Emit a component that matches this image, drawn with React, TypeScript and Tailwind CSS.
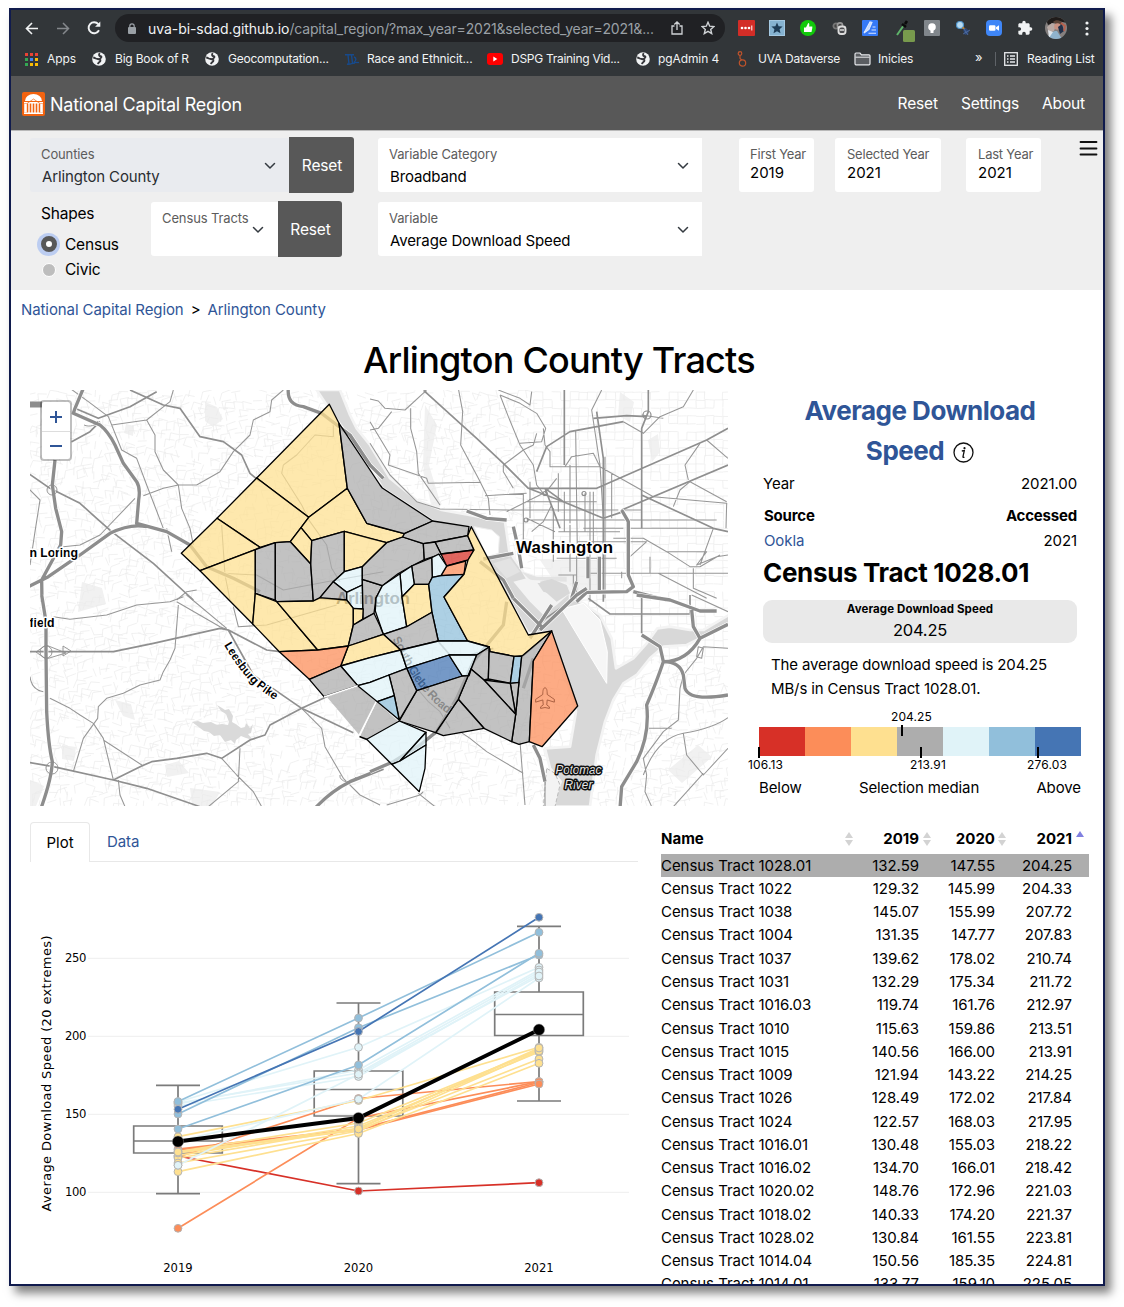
import React from "react";

const Y = "#fee090";
const G = "#adadad";
const L = "#e0f3f8";
const B = "#91bfdb";
const O = "#fc8d59";
const R = "#d73027";
const D = "#4575b4";

/* ---------- browser chrome ---------- */

const Globe = () => (
  <svg width="14" height="14" viewBox="0 0 14 14">
    <circle cx="7" cy="7" r="6.8" fill="#f1f3f4" />
    <path d="M1.200 5.500c2 .2 2.400 1.500 4.300 1.400M7.800 1.200C6.500 2.500 7 4 8.600 4.200c1.400.2.900 1.600-.8 2.600M5.400 7c1.600.2 3.400.3 3 1.800-.4 1.400-2.200 1-2.400 3.400" fill="none" stroke="#35363a" strokeWidth="1.900" />
  </svg>
);

const AppsIcon = () => (
  <svg width="13" height="13" viewBox="0 0 13 13">
    {["#ea4335", "#ea4335", "#ea4335", "#34a853", "#4285f4", "#fbbc04", "#34a853", "#fbbc04", "#fbbc04"].map((c, i) => (
      <rect key={i} x={(i % 3) * 5} y={Math.floor(i / 3) * 5} width="3" height="3" fill={c} />
    ))}
  </svg>
);

const RaceIcon = () => (
  <svg width="16" height="13" viewBox="0 0 16 13">
    <path d="M1 1.800h9M4 2l1 9M7.500 2l1 8M3 11c3 1 5-1 8-1M10 4c3 1 2 4 0 5" fill="none" stroke="#174a8c" strokeWidth="1.400" />
    <path d="M11 9.500h4" stroke="#174a8c" strokeWidth="1.300" />
  </svg>
);

const YoutubeIcon = () => (
  <svg width="16" height="12" viewBox="0 0 16 12">
    <rect width="16" height="12" rx="3" fill="#f00" />
    <path d="M6.300 3.500v5l4-2.500z" fill="#fff" />
  </svg>
);

const DataverseIcon = () => (
  <svg width="10" height="16" viewBox="0 0 10 16" fill="none" stroke="#c0532b" strokeWidth="1.200">
    <circle cx="3" cy="2.500" r="1.800" />
    <circle cx="5.500" cy="12" r="3.200" />
    <path d="M3 4.300v3c0 .8 1 1 2 1.500" />
  </svg>
);

const FolderIcon = () => (
  <svg width="17" height="14" viewBox="0 0 17 14">
    <path d="M1 11.500V2.200C1 1.500 1.400 1 2 1h4l1.500 1.800H15c.6 0 1 .4 1 1v8c0 .6-.4 1-1 1H2c-.6 0-1-.5-1-1.300z" fill="#5b5e62" stroke="#e8eaed" strokeWidth="1.200" />
    <path d="M1.500 5.200h14" stroke="#e8eaed" />
  </svg>
);

const bookmarks = [
  { label: "Apps", icon: <AppsIcon />, cell: "w-[67px]", gap: "w-[22px]", text: "tracking-[-0.1px]" },
  { label: "Big Book of R", icon: <Globe />, cell: "w-[113px]", gap: "w-[23px]", text: "tracking-[-0.2px]" },
  { label: "Geocomputation...", icon: <Globe />, cell: "w-[139px]", gap: "w-[23px]", text: "tracking-[-0.22px]" },
  { label: "Race and Ethnicit...", icon: <RaceIcon />, cell: "w-[143px]", gap: "w-[23px]", text: "tracking-[-0.15px]" },
  { label: "DSPG Training Vid...", icon: <YoutubeIcon />, cell: "w-[149px]", gap: "w-[24px]", text: "tracking-[-0.28px]" },
  { label: "pgAdmin 4", icon: <Globe />, cell: "w-[101px]", gap: "w-[22px]", text: "tracking-[-0.1px]" },
  { label: "UVA Dataverse", icon: <DataverseIcon />, cell: "w-[117px]", gap: "w-[21px]", text: "tracking-[-0.25px]" },
  { label: "Inicies", icon: <FolderIcon />, cell: "w-[120px]", gap: "w-[24px]", text: "tracking-[-0.15px]" },
];

const extensions = [
  <svg width="17" height="16" viewBox="0 0 17 16"><rect width="17" height="16" rx="1" fill="#d32d27" /><circle cx="4" cy="8" r="1.300" fill="#fff" /><circle cx="7.500" cy="8" r="1.300" fill="#fff" /><circle cx="11" cy="8" r="1.300" fill="#fff" /><path d="M13.800 5.500v5" stroke="#fff" /></svg>,
  <svg width="16" height="16" viewBox="0 0 16 16"><rect width="16" height="16" fill="#a5c9e2" /><rect x="1" y="1" width="14" height="14" fill="#86b3d1" /><path d="M8 2.500l1.600 3.800 4 .3-3 2.700.9 4L8 11.200l-3.500 2.100.9-4-3-2.700 4-.3z" fill="#1f3d57" /></svg>,
  <svg width="16" height="16" viewBox="0 0 16 16"><circle cx="8" cy="8" r="8" fill="#12c90b" /><path d="M4 7.500h2L8.200 3c1.300.2 1.300 1.500.9 3.500h3.200v1.500l-.8 4H4z" fill="#fff" /></svg>,
  <svg width="15" height="14" viewBox="0 0 15 14"><circle cx="4" cy="5" r="2.600" fill="#444" stroke="#777" strokeWidth="1.800" /><circle cx="8" cy="4.500" r="2.600" fill="#444" stroke="#999" strokeWidth="1.600" /><rect x="6.500" y="5.500" width="7" height="7.500" rx="2.500" fill="#4a4b4e" stroke="#ddd" strokeWidth="1.900" /><path d="M8 9h4" stroke="#ddd" strokeWidth="1.500" /></svg>,
  <svg width="16" height="16" viewBox="0 0 16 16"><rect width="16" height="16" rx="1" fill="#3579f6" /><path d="M2 13L8 2l2 .5-3 7zM6.500 13.200H14M9.500 10H14M10.500 7H13.500" stroke="#dbe8ff" strokeWidth="1.100" fill="#c5d9fd" /></svg>,
  <svg width="19" height="22" viewBox="0 0 19 22" className="translate-x-[4px] translate-y-[3px]"><path d="M1 15L8 5" stroke="#5fb56b" strokeWidth="2" /><path d="M6 4l4 3M9 4l2-3" stroke="#0b0b0b" strokeWidth="2.600" /><rect x="7" y="10" width="12" height="12" rx="1.500" fill="#789a4d" /></svg>,
  <svg width="16" height="16" viewBox="0 0 16 16"><rect width="16" height="16" rx="1" fill="#80868b" /><circle cx="8" cy="7" r="3.800" fill="#fff" /><path d="M6.500 10h3v3h-3z" fill="#fff" /></svg>,
  <svg width="16" height="16" viewBox="0 0 16 16"><circle cx="5" cy="5" r="3.500" fill="#b7dbf2" stroke="#4f93c9" strokeWidth="1.200" /><path d="M7.500 7.500L11 10" stroke="#c98a35" strokeWidth="1.800" /><path d="M8 9l3-1 3 3-1 3-3 1-1-2z" fill="#2c4777" /><path d="M8 14l7-4M9 9l4 6" stroke="#5573a8" strokeWidth=".8" /></svg>,
  <svg width="16" height="16" viewBox="0 0 16 16"><rect width="16" height="16" rx="4" fill="#3f86f7" /><rect x="3" y="5.200" width="6.500" height="5.600" rx="1.200" fill="#fff" /><path d="M10 7.200l3-2v5.600l-3-2z" fill="#fff" /></svg>,
  <svg width="16" height="16" viewBox="0 0 24 24" fill="#f1f3f4"><path d="M20.500 11H19V7c0-1.100-.9-2-2-2h-4V3.500a2.500 2.500 0 0 0-5 0V5H4c-1.100 0-2 .9-2 2v3.800h1.500a2.700 2.700 0 0 1 0 5.400H2V20c0 1.100.9 2 2 2h3.800v-1.500a2.700 2.700 0 0 1 5.400 0V22H17c1.100 0 2-.9 2-2v-4h1.500a2.500 2.500 0 0 0 0-5z" /></svg>,
  <svg width="22" height="22" viewBox="0 0 22 22"><defs><clipPath id="face"><circle cx="11" cy="11" r="11" /></clipPath></defs><g clipPath="url(#face)"><rect width="22" height="22" fill="#85807f" /><path d="M0 0h22v6L13 4 3 8z" fill="#1f1b1a" /><path d="M2 10l5-4 4 2-2 6-5 2z" fill="#b9a9a4" /><path d="M8 5c3-3 8-2 10 2l-3 1-4-1z" fill="#5b4438" /><circle cx="12.500" cy="9.500" r="3.300" fill="#c99282" /><path d="M3 22c0-6 4-8 9-8l5 8z" fill="#8fb3cd" /><path d="M3 13l5 2-4 6" fill="#dfe5ea" /><path d="M13 10l4-3 2 7-4 3z" fill="#22304a" /><path d="M16 6l4 3-1 5" stroke="#b9604d" strokeWidth="1.800" fill="none" /></g></svg>,
  <svg width="4" height="15" viewBox="0 0 4 15" fill="#f1f3f4"><circle cx="2" cy="2" r="1.600" /><circle cx="2" cy="7.500" r="1.600" /><circle cx="2" cy="13" r="1.600" /></svg>,
];

function BrowserChrome() {
  return (
    <div className="h-[66px] bg-[#323639] text-[#f1f3f4]">
      <div className="flex h-[36px] items-center pl-[14px]">
        <svg width="14" height="13" viewBox="0 0 14 13" fill="none" stroke="#f1f3f4" strokeWidth="1.600"><path d="M13 6.500H1.500M7 1L1.500 6.500 7 12" /></svg>
        <svg width="14" height="13" viewBox="0 0 14 13" fill="none" stroke="#84888c" strokeWidth="1.500" className="ml-[17px]"><path d="M1 6.500h11.500M7 1l5.500 5.500L7 12" /></svg>
        <svg width="14" height="14" viewBox="0 0 14 14" fill="none" stroke="#f1f3f4" strokeWidth="1.900" className="ml-[17px]"><path d="M12 9.300A5.500 5.500 0 1 1 11.300 3.200" /><path d="M13.300.5v5.200H8.100z" fill="#f1f3f4" stroke="none" /></svg>
        <div className="ml-[14px] flex h-[28px] w-[610px] items-center rounded-full bg-[#202124] pl-[13px]">
          <svg width="8" height="11" viewBox="0 0 8 11"><rect y="4" width="8" height="7" rx="1" fill="#9aa0a6" /><path d="M1.800 4.500V3a2.200 2.200 0 0 1 4.400 0v1.500" stroke="#9aa0a6" strokeWidth="1.200" fill="none" /></svg>
          <span className="ml-[12px] w-[506px] whitespace-nowrap text-[14px] tracking-[-0.19px] text-[#9aa0a6]"><span className="tracking-[-0.06px] text-[#f1f3f4]">uva-bi-sdad.github.io</span>/capital_region/?max_year=2021&amp;selected_year=2021&amp;...</span>
          <svg width="12" height="14" viewBox="0 0 12 14" fill="none" stroke="#d0d3d6" strokeWidth="1.300" className="ml-[17px]"><path d="M3.500 5H1v8h10V5H8.500M6 9V1M3.300 3.500L6 1l2.700 2.500" /></svg>
          <svg width="14" height="14" viewBox="0 0 14 14" fill="none" stroke="#d0d3d6" strokeWidth="1.400" className="ml-[18px]"><path d="M7 1.300l1.700 3.900 4.200.4-3.200 2.800 1 4.200L7 10.400l-3.700 2.200 1-4.200L1.100 5.600l4.200-.4z" /></svg>
        </div>
        <div className="ml-[6px] flex">
          {extensions.map((e, i) => (
            <div key={i} className="flex h-[24px] w-[30.950px] items-center justify-center">{e}</div>
          ))}
        </div>
      </div>
      <div className="flex h-[26px] items-center pl-[14px] text-[12px]">
        {bookmarks.map((b) => (
          <div key={b.label} className={"flex shrink-0 items-center whitespace-nowrap " + b.cell}>
            <span className={"shrink-0 " + b.gap}>{b.icon}</span>
            <span className={b.text}>{b.label}</span>
          </div>
        ))}
        <span className="ml-px w-[20px] pb-[2px] text-[13px]">»</span>
        <span className="h-[14px] w-px bg-[#5f6368]" />
        <svg width="14" height="14" viewBox="0 0 14 14" fill="none" stroke="#e8eaed" strokeWidth="1.300" className="ml-[8px]"><rect x=".7" y=".7" width="12.600" height="12.600" /><path d="M3 4h1.500M6 4h5M3 7h1.500M6 7h5M3 10h1.500M6 10h5" /></svg>
        <span className="ml-[9px] whitespace-nowrap tracking-[-0.15px]">Reading List</span>
      </div>
    </div>
  );
}

/* ---------- site header and controls ---------- */

const Chevron = () => (
  <svg width="12" height="8" viewBox="0 0 12 8" fill="none" stroke="#343a40" strokeWidth="1.500" strokeLinecap="round" strokeLinejoin="round" className="mt-px"><path d="M1.500 1.500L6 6l4.500-4.500" /></svg>
);

function Select({ label, value, box }: { label: string; value: string; box: string }) {
  return (
    <div className={"flex h-[54px] items-center justify-between rounded-l-[3px] pl-[11px] " + box}>
      <div className="h-[54px] whitespace-nowrap pt-[7px]">
        <div className="h-[20px] text-[13px] leading-[19px] tracking-[-0.12px] text-[#5c5c5c]">{label}</div>
        <div className="ml-px text-[15px] leading-[24px] tracking-[-0.13px]">{value}</div>
      </div>
      <Chevron />
    </div>
  );
}

const ResetButton = ({ w }: { w: string }) => (
  <div className={"flex h-[56px] items-center justify-center rounded-r-[3px] bg-[#585858] pl-px pt-[2px] text-[15.500px] tracking-[-0.15px] text-white " + w}>Reset</div>
);

function YearBox({ label, value, box }: { label: string; value: string; box: string }) {
  return (
    <div className={"h-[54px] whitespace-nowrap rounded-[3px] bg-white pt-[7px] " + box}>
      <div className="text-[13px] leading-[19px] tracking-[-0.22px] text-[#5c5c5c]">{label}</div>
      <div className="text-[15px] leading-[18px] tracking-[0px]">{value}</div>
    </div>
  );
}

function Header() {
  return (
    <div className="flex h-[54px] items-center bg-[#585858] pl-[11px] pt-[2px] text-white">
      <svg width="23" height="24" viewBox="0 0 23 24">
        <rect width="23" height="24" rx="2" fill="#f26310" />
        <path d="M3 9a8.500 7 0 0 1 17 0z" fill="#fff" />
        <path d="M2 10h19v1.600H2zM2 20.500h19V22H2z" fill="#fff" />
        <path d="M3.500 12v8.500M19.500 12v8.500" stroke="#fff" strokeWidth="2.600" />
        <path d="M7 11v10M10 11v10M13 11v10M16 11v10" stroke="#fff" strokeWidth="1.400" />
        <path d="M5 11.500l6.500-4.500 6.500 4.500" fill="none" stroke="#f26310" strokeWidth=".7" />
      </svg>
      <span className="ml-[5px] text-[18px] tracking-[-0.250px]">National Capital Region</span>
      <div className="ml-auto mr-[18px] flex gap-[23px] text-[15.500px] tracking-[-0.15px]">
        <span>Reset</span><span>Settings</span><span>About</span>
      </div>
    </div>
  );
}

function Controls() {
  return (
    <div className="flex h-[160px] items-start border-t border-[#b9b9b9] bg-[#efefef] pt-[6px] pl-[19px]">
      <div className="w-[348px]">
        <div className="flex items-center">
          <Select label="Counties" value="Arlington County" box="w-[259px] bg-[#e9ebef] pr-[13px] text-[#2a2d31]" />
          <ResetButton w="w-[65px]" />
        </div>
        <div className="mt-[8px] flex">
          <div className="w-[121px] pl-[11px] text-[15.500px] tracking-[-0.2px]">
            <div className="h-[24px] pt-px leading-[24px]">Shapes</div>
            <div className="mt-[6px] -ml-[4px] flex h-[26px] items-center">
              <span className="flex size-[23px] items-center justify-center rounded-full bg-[#bccdf1]"><span className="size-[16px] rounded-full border-[5px] border-[#585858] bg-white" /></span>
              <span className="ml-[5px] pt-px">Census</span>
            </div>
            <div className="flex h-[25px] items-center">
              <span className="ml-[1px] size-[14px] rounded-full border-[1.500px] border-white bg-[#bdbdbd]" />
              <span className="ml-[9px]">Civic</span>
            </div>
          </div>
          <div className="flex h-[56px] items-center">
            <Select label="Census Tracts" value="" box="w-[127px] bg-white pr-[14px]" />
            <ResetButton w="w-[64px]" />
          </div>
        </div>
      </div>
      <div className="flex w-[361px] flex-col gap-[10px] pt-px">
        <Select label="Variable Category" value="Broadband" box="w-[324px] bg-white pr-[13px]" />
        <Select label="Variable" value="Average Download Speed" box="w-[324px] bg-white pr-[13px]" />
      </div>
      <div className="flex pt-px">
        <YearBox label="First Year" value="2019" box="w-[75px] pl-[11px]" />
        <YearBox label="Selected Year" value="2021" box="ml-[21px] w-[106px] pl-[12px]" />
        <YearBox label="Last Year" value="2021" box="ml-[25px] w-[75px] pl-[12px]" />
      </div>
      <svg width="19" height="16" viewBox="0 0 19 16" stroke="#111" strokeWidth="1.800" strokeLinecap="round" className="ml-[38px] mt-[3px]"><path d="M1.500 2h16M1.500 8.500h16M1.500 14.500h16" /></svg>
    </div>
  );
}

/* ---------- map ---------- */

const tracts: [string, string][] = [
  [Y, "329.3,404.3 339,423.3 347.3,488.3 308.7,517.3 256.7,478"],
  [Y, "256.7,478 308.7,517.3 301,527.7 290.3,541.7 275.3,542.7 260,547.3 217,518.3"],
  [Y, "217,518.3 260,547.3 255.3,549.7 200,570.7 181.3,553.3"],
  [Y, "200,570.7 255.3,549.7 255.3,593.3 252.7,624"],
  [Y, "347.3,488.3 366.7,523.3 380,527.3 404.3,533.7 402.7,537 386.7,542.7 370,538.7 344.3,531.3 311.7,540.7 301,527.7 308.7,517.3"],
  [Y, "301,527.7 311.7,540.7 310.7,564 290.3,541.7"],
  [G, "339,423.3 380,485 382.3,488 432.7,521 404.3,533.7 366.7,523.3 347.3,488.3"],
  [G, "255.3,549.7 275.3,542.7 275.3,600 255.3,593.3"],
  [G, "275.3,542.7 290.3,541.7 310.7,564 313.3,601 276.7,601.7 275.3,600"],
  [G, "311.7,540.7 344.3,531.3 344.3,571.7 333.3,581.7 319.3,598.3 313.3,601 310.7,564"],
  [Y, "344.3,531.3 386.7,542.7 370,559 362.3,566.7 344.3,571.7"],
  [L, "344.3,571.7 362.3,566.7 362.3,585 346.7,592.3 333.3,581.7"],
  [G, "333.3,581.7 346.7,592.3 346.7,600 319.3,598.3"],
  [L, "346.7,592.3 362.3,585 363,609 353.3,608.3 346.7,600"],
  [G, "362.3,579.3 382.3,585.7 376,598 374,613.3 363,619"],
  [G, "402.7,537 386.7,542.7 370,559 362.3,566.7 362.3,579.3 382.3,585.7 398,573.7 411.7,566 424.3,559.7 423.3,543.7"],
  [G, "404.3,533.7 432.7,521 469,526.7 467.7,535.7 435,542 423.3,543.7 402.7,537"],
  [G, "435,542 467.7,535.7 474,550 441,554"],
  [G, "423.3,543.7 435,542 441,554 424.3,559.7"],
  [R, "441,554 474,550 468,560 446.7,566"],
  [O, "446.7,566 465.7,561 464,574.3 441,575.7"],
  [L, "431.7,557.7 438.700,554 446.7,566 441,575.7 432.3,577.3"],
  [G, "411.7,566 431.7,557.7 432.3,577.3 428.7,584.3 414.3,584.3"],
  [L, "400,573.7 411.7,566 414.3,584.3 402,597"],
  [L, "400,573.7 402,597 406.7,626.7 383.3,634.3 375.3,611 376,598 382.3,585.7"],
  [Y, "414.3,584.3 428.7,584.3 432,612.3 406.7,626.7 402,597"],
  [B, "432.3,577.3 441,575.700 464,574.3 444,597 467.7,641 438.3,641 432,612.3 428.7,584.3"],
  [Y, "471.3,526.7 528.3,635 551.7,631 523.3,655.7 514,656.3 490,651.7 489.3,647 467.7,641 444,597 464,574.3 468,560 474,550 467.7,535.7"],
  [G, "432,612.3 438.3,641 400.7,650 383.3,634.3 406.7,626.7"],
  [Y, "252.7,624 255.3,593.3 276.7,601.7 317.7,650 279.3,651.7"],
  [Y, "276.7,601.7 313.3,601 320,597.7 346.7,600 353.3,608.3 353.3,625 348.3,646 317.7,650"],
  [Y, "353.3,608.3 363.3,609 362.7,619 353.3,625"],
  [G, "353.3,625 374,613.3 380,626 383.3,634.3 348.3,646"],
  [Y, "348.3,646 383.3,634.3 400.7,650 370,657.7 340.7,666"],
  [O, "279.3,651.7 317.7,650 348.3,646 340.7,666 309.3,679.3"],
  [L, "340.7,666 370,657.7 400.7,650 406.7,668.3 370,682.3 357.7,685.7"],
  [L, "400.7,650 438.3,641 467.7,641 489.3,647 476.7,655 449,655 406.7,668.3"],
  [D, "406.7,668.3 449,655 462.3,676 416.7,690.7"],
  [L, "449,655 476.7,655 469,675.7 462.3,676"],
  [G, "489.3,647 488.3,679 484,680 471,669 476.7,655"],
  [G, "489.3,647 490,651.7 514,656.3 510.3,683.3 488.3,679"],
  [B, "514,656.3 521.7,656.3 519,682.3 510.3,683.3"],
  [G, "521.7,656.3 551.7,631 533.3,661 529.3,741.7 519,744.3 511.7,741.7 515.7,714.3 519,682.3"],
  [O, "551.7,631 577.7,706 542,746.7 529.3,741.7 533.3,661"],
  [G, "510.3,683.3 519,682.3 515.7,714.3"],
  [G, "484,680 510.3,683.3 515.7,714.3"],
  [G, "471,669 484,680 515.7,714.3 511.7,741.7 484,728.3 458.3,699.3"],
  [G, "458.3,699.3 484,728.3 443.3,735.7 435.7,732.7"],
  [G, "416.7,690.7 462.3,676 469,675.7 471,669 458.3,699.3 435.7,732.7 399.3,721"],
  [G, "389,675 406.7,668.3 416.7,690.7 399.3,720 394.3,695.7"],
  [L, "357.7,685.7 370,682.3 389,675 394.3,695.7 377.3,701.7"],
  [B, "377.3,701.7 394.3,695.7 399.3,720"],
  [G, "340.7,666 357.7,685.7 324,696.7 309.3,679.3"],
  [L, "366.7,739.3 399.3,721 426,732.3 400,761 391.7,764.3"],
  [L, "426,732.3 426,745 400,761"],
  [L, "391.7,764.3 400,761 426,745 425,768.3 419.3,791.7"],
];

/* Each sheet of the base map is traced at three times its drawn size. */
const sheets: { at: string; wide: string; mid: string; thin: string }[] = [
  {
    at: "translate(20 385) scale(.33333)",
    wide: "M190 10L165 70 160 85 240 120Q265 140 285 180L310 235 350 290Q362 310 356 345L350 415 440 440 510 480 560 545 640 580 720 620M105 225L97 300 107 370 125 440 122 480 65 585 66 650M25 605L85 575 180 510 270 445Q330 415 380 425M805 10Q800 60 850 65L905 85 990 150 1050 240 1090 280",
    mid: "M165 70L235 100 330 65 410 20M25 265L90 310 180 355 230 400 275 440 400 535 520 645M330 15L430 60 480 70 540 155 610 170 665 210 690 265 720 290M155 170L210 140 240 110",
    thin: "M150 10L205 50 265 95 305 195 350 220 380 300 430 430M460 15L450 50 380 105 275 120M380 105L405 150 405 200 430 255 475 300 485 370 510 430 520 480M475 300L530 300 600 260 640 200 690 150 700 105 750 80 755 45 790 15M475 300L430 310 370 332M130 485L180 480 240 450 345 340M25 310L60 345 45 440 30 540M440 430L455 500M790 240L785 265 845 360 870 410 920 480 935 550 960 590M790 240L830 210 885 150 940 155 940 110M605 420L615 570 630 645M605 565L710 570 790 615 920 590 1090 560M470 645L500 620 530 615",
  },
  {
    at: "translate(370 385) scale(.33333)",
    wide: "M290 378L350 400 410 405M430 425L445 490 455 550M340 522L430 505M755 375L775 410 775 570 790 605 770 620 650 622 620 650M790 620L890 645M620 590L605 640M330 530L400 585 430 640M654 515L654 580M688 515L688 615",
    mid: "M165 20L320 160 400 235 475 310 580 350 700 400 760 380M755 375L1074 240M475 310L680 310 1010 165 1074 130M583 10V240M680 80L700 220V650M815 130V430M815 330L1030 430 1074 440M580 350L525 310 555 390 570 430M835 10V80L815 130M500 260L530 185 600 140 760 110M670 100L770 92 830 95",
    thin: "M0 42L25 48 45 70 105 75 165 20M65 80L25 130 0 135M122 70V130L140 200 145 265 210 360M0 110L60 210 55 240 170 280 175 295 330 292M265 10L278 80 272 180 325 280 355 340 360 390M0 175L60 270 140 350 210 372 410 375M345 332L470 325M390 30L415 95 450 180 490 240 500 300 520 325 410 380M390 30L450 55 500 85 527 130 515 170 450 175M385 15L450 40 480 60 485 20M520 130L525 180 540 200V245H690L850 335 1070 355 1068 430M585 245L605 215 670 205 690 245M695 15L665 75 690 240 700 400M600 240V415M617 135L622 500M645 325V440M660 320V650M670 320V490M705 215V640M725 265V400M565 265V380M583 320V440M760 375H815M410 375H745M480 290V400M460 325V500M470 400L555 440M550 400V530M470 405H1040M565 440H750M780 430H1030M470 350H680M640 430H760M620 470H830L780 515M560 520H740M660 565H1074M840 515V565M730 460H820L890 500H1010L980 540 1040 515 1074 510M890 500L960 545H990L1050 510M970 550V610L1040 640M865 565L1010 640M1030 430L990 540M910 365L930 315 960 290 1070 350M1010 165L1074 220M990 175L945 240 955 285M760 110L820 145 870 95 940 65 970 15M815 90L880 100M600 420V560M620 570H565M455 480H600M610 570V620M550 370V520M525 325L560 280M430 310L400 260 400 240 460 195 490 180 500 145M485 440L520 410 545 360M620 650V510M755 560V580",
  },
  {
    at: "translate(20 595) scale(.33333)",
    wide: "M65 0L78 80 78 170 80 350Q85 450 97 500 95 550 63 640M885 640Q930 590 990 560L1090 520",
    mid: "M20 170L280 170 400 145 600 100 625 105 740 165 780 170M25 502L100 515 280 555 380 580 540 635M280 555L365 513 395 500 470 490 560 475 605 490 690 435 735 420 750 390 845 340 920 305M625 105L700 240 845 340 1000 413",
    thin: "M100 65L150 73 260 60 350 30 450 20 490 5M470 20L600 95 625 105M500 0L620 100M475 30L465 160 450 195 430 230 420 255 360 270 310 295 260 310 235 335 233 370 190 430 175 480 160 530M90 310L150 340 180 360 220 385 250 430 280 555M250 435L370 513M295 555L300 600 315 635M605 490L650 540 700 590 725 635M660 460L655 560 565 635M845 340L905 400 915 455 970 550 1020 600 1080 630M30 245Q35 285 70 290M640 35L655 95 740 90 950 30",
  },
  {
    at: "translate(370 595) scale(.33333)",
    wide: "M510 105L620 0 650-20M515 95L430 10M480 130L545 30M800 0L900 15 990 48H1040M965 45L970 95 990 130 1074 88M990 130Q950 200 880 200L870 155 815 120M880 200Q930 200 940 240L945 280Q960 320 1074 300M880 200Q860 260 830 330 840 420 800 500L755 575 750 640M0 530L70 500 150 450 200 410 260 310 310 200 400 90 410 20M490 450L510 490 525 560M490 190L460 280",
    mid: "M505 85L600 20M655 10L720 57H960V0M815 0V115M205 140L240 180 300 180 370 160",
    thin: "M270 410L300 430 350 470 460 535M450 440L465 630M525 560V640M50 630L150 600 160 590M145 595L195 635M240 400L210 350 175 320 145 285M1074 160L1000 155 980 190 940 240 930 280 925 375 880 410 820 490 830 540 825 590 845 635M835 400H905M1074 368Q1030 400 940 415 860 430 820 540M940 415L950 480 1000 540 1074 460M1000 535L910 635M980 185L985 155 1000 160 995 190ZM965 0L1074 50",
  },
];

/* Faint residential streets: short jittered grid segments from a fixed seed. */
function streets() {
  let s = 7;
  const rnd = () => {
    s = (s * 16807) % 2147483647;
    return s / 2147483647;
  };
  let d = "";
  for (let y = 392; y < 806; y += 8) {
    for (let x = 30; x < 728; x += 9) {
      const grid = x > 530 && y < 660;
      const j = grid ? 1 : 7;
      const ax = x + (rnd() - 0.5) * j;
      const ay = y + (rnd() - 0.5) * j;
      if (rnd() > 0.2) d += `M${ax.toFixed(1)} ${ay.toFixed(1)}l9 ${((rnd() - 0.5) * j).toFixed(1)}`;
      if (rnd() > 0.25) d += `M${ax.toFixed(1)} ${ay.toFixed(1)}l${((rnd() - 0.5) * j).toFixed(1)} 8`;
    }
  }
  return d;
}

const halo = { paintOrder: "stroke" as const };

function CountyMap() {
  return (
    <div className="relative h-[416px] w-[698px] shrink-0">
      <svg width="698" height="416" viewBox="30 390 698 416" fontFamily="'Liberation Sans', Arial, sans-serif" className="block">
        <rect x="30" y="390" width="698" height="416" fill="#fff" />
        <g fill="#f1f1f1">
          <path d="M205 402l12 5 6 12-10 8-8-6zM126 424l8 2-1 10-9-3zM82 582l20 6 4 16-28 8zM115 700l16 4 4 16-12-4zM62 745l14 2-2 14-12-2zM165 765l14-4 10 12-22 4zM190 788l30 4-8 14h-20zM425 405l12 20-8 40 12 40-8 10-10-50zM620 392l14 10-4 20-12-6zM648 440l10-6 2 18-8 10zM668 770l30-25 14 12-30 26zM540 560h60v30h-40zM30 780l14 6-8 20h-6z" />
        </g>
        <path d={streets()} fill="none" stroke="#ebebeb" strokeWidth=".7" />
        <g transform="translate(370 385) scale(.33333)" strokeLinejoin="round">
          <path d="M-160 15L-90 15-60 90-40 130 0 180 60 280 140 345 215 375 290 388 405 410 418 500 450 545 470 578 500 590 560 590 600 605 600 640 640 655 690 690 725 760 738 850 790 820 830 775 862 730 900 725 960 735 1000 735 1080 688V712L1000 755 950 780 880 785 840 820 800 870 760 895 730 945 705 1010 680 1110 660 1265H545L572 1190 540 1150 525 1090 600 1085 618 980 545 740 475 745 405 620 310 440 188 408 37 309 0 245-130 60Z" fill="#d8d8d8" stroke="#f4f4f4" strokeWidth="8" />
          <path d="M312 425L365 435 388 455 385 505 350 515Z" fill="#fff" stroke="#efefef" strokeWidth="3" />
          <path d="M370 535L420 520 450 560 410 580ZM455 560L500 575 590 575 590 590 480 585Z" fill="#e3e3e3" />
          <path d="M575 672L640 655 690 705 712 800 710 895 640 780Z" fill="#f6f6f6" stroke="#fff" strokeWidth="3" />
          <path d="M430 590L470 580 500 590 520 620 560 630 590 600 605 620 560 660 520 690 480 650Z" fill="#f3f3f3" />
          <path d="M510 590L545 582 590 600 600 625 560 650 520 615Z" fill="#d8d8d8" />
          <path d="M530 1150L555 1165 570 1200 555 1265H520Z" fill="#f3f3f3" stroke="#bbb" strokeWidth="3" strokeDasharray="12 6" />
        </g>
        <path d="M192 722l6-1 5 2 8-1 6 3 5-1 6 1 1-3-3-8-5-3-4-6 5 3 3 2 4-1 4 7-1 6 5 3 4 3 4-1 1-4 4 5 3-4-2 9-3 1 5 6-7-2-5-2-5 4-1 4-4-4-6 2-5-7-6 1-5-4-5-1-4-3z" fill="#dadada" />
        <g fill="none" stroke="#8d8d8d" strokeLinejoin="round">
          {sheets.map((s) => (
            <g key={s.at} transform={s.at}>
              <path d={s.thin} strokeWidth="3.200" stroke="#979797" />
              <path d={s.mid} strokeWidth="5" stroke="#8f8f8f" />
              <path d={s.wide} strokeWidth="14" stroke="#fff" />
              <path d={s.wide} strokeWidth="10" />
            </g>
          ))}
          <path d="M30 404.500h12" strokeWidth="6" />
          <g strokeWidth=".9">
            <circle cx="46" cy="652" r="6" /><circle cx="52" cy="768" r="6" /><circle cx="52" cy="490" r="5" /><path d="M36 652l10-7 20 8-20 6zM71 651l-8-5v10zM340 775a7 5 0 1 0 16 2M84 425a9 6 0 0 0 14-4" />
          </g>
          <g strokeWidth="1.200"><circle cx="545" cy="493.500" r="2" /><circle cx="584" cy="493.500" r="2" /><circle cx="526" cy="520" r="2" /><circle cx="647" cy="415" r="4" /><circle cx="425" cy="391" r="1" /></g>
        </g>
        <text x="336" y="603.500" fontSize="17" fontWeight="bold" fill="#333" textLength="74">Arlington</text>
        <path id="glebe" d="M392 639Q404 660 412 676 430 702 452 717" fill="none" />
        <text fontSize="12" fontWeight="bold" fill="#222" stroke="#fff" strokeWidth="2" style={halo}><textPath href="#glebe" textLength="94">South Glebe Road</textPath></text>
        <path d="M326.700 696.700L357.700 685.700 376 702 359.300 735z" fill="#adadad" fillOpacity=".75" />
        <path d="M376.500 702L398 721 366 739 360.500 735.500z" fill="#adadad" fillOpacity=".75" />
        <g stroke="#000" strokeWidth="1.300" strokeLinejoin="round" fillOpacity=".74">
          {tracts.map(([fill, points], i) => (
            <polygon key={i} points={points} fill={fill} />
          ))}
        </g>
        <path d="M324 697L357.700 685.700M376 702L359.300 735" fill="none" stroke="#fff" strokeWidth="1.500" />
        <path d="M359.500 736.500l7.500 3" stroke="#000" strokeWidth="1.600" />
        <path d="M545 688.500c1.500 0 2 2 2 6l6.500 4.500v2.500l-6.500-2-.4 4.500 2.400 1.800v1.400l-4-.8-4 .8v-1.400l2.400-1.800-.4-4.500-6.500 2V699l6.500-4.500c0-4 .5-6 2-6z" transform="translate(-54.5 -69.5) scale(1.1)" fill="none" stroke="#a1583a" strokeWidth=".8" />
        <g fontWeight="bold" fill="#000" stroke="#fff" strokeWidth="3" strokeLinejoin="round" style={halo}>
          <text x="516" y="552.500" fontSize="16.900" textLength="97">Washington</text>
          <text x="29.500" y="557" fontSize="12.300" textLength="48.500">n Loring</text>
          <text x="29.500" y="626.500" fontSize="12.300" textLength="25">field</text>
          <path id="leesburg" d="M224 645Q238 669 252 683 264 693 282 705" fill="none" stroke="none" />
          <text fontSize="11.800"><textPath href="#leesburg" textLength="76">Leesburg Pike</textPath></text>
        </g>
        <g fontSize="12" fontStyle="italic" fill="#e8e8e8" stroke="#111" strokeWidth="3" strokeLinejoin="round" style={halo}>
          <text x="555.500" y="774" textLength="46">Potomac</text>
          <text x="564.500" y="789" textLength="28">River</text>
        </g>
      </svg>
      <div className="absolute left-[10px] top-[10px] flex h-[61px] w-[32px] flex-col rounded-[4px] border-2 border-black/25 bg-white bg-clip-padding">
        <div className="flex h-[31px] items-center justify-center border-b border-[#ddd]"><svg width="12" height="12" stroke="#2f5597" strokeWidth="2"><path d="M0 6h12M6 0v12" /></svg></div>
        <div className="flex h-[27px] items-center justify-center"><svg width="12" height="12" stroke="#2f5597" strokeWidth="2"><path d="M0 6h12" /></svg></div>
      </div>
    </div>
  );
}

/* ---------- info panel ---------- */

const scale = ["bg-[#d73027]", "bg-[#fc8d59]", "bg-[#fee090]", "bg-[#adadad]", "bg-[#e0f3f8]", "bg-[#91bfdb]", "bg-[#4575b4]"];

function Info() {
  return (
    <div className="ml-[35px] w-[314px] pt-px text-[15px] tracking-[-0.1px]">
      <h2 className="text-center text-[26px] font-bold leading-[40px] tracking-[-0.500px] text-[#2f5597]">
        Average Download<br />Speed
        <svg width="21" height="21" viewBox="0 0 21 21" className="ml-[9px] inline-block align-[-3px]"><circle cx="10.500" cy="10.500" r="9.500" fill="none" stroke="#111" strokeWidth="1.300" /><circle cx="11.500" cy="6.200" r="1.100" fill="#111" /><path d="M8.800 9l2.500-.4-1.300 6c-.2 1 .3 1.200 1.400.3" fill="none" stroke="#111" strokeWidth="1.300" /></svg>
      </h2>
      <div className="flex h-[25px] items-center justify-between pt-px"><span>Year</span><span>2021.00</span></div>
      <div className="mt-[7px] flex h-[25px] items-center justify-between pt-px font-bold tracking-[-0.2px]"><span className="ml-px">Source</span><span>Accessed</span></div>
      <div className="flex h-[25px] items-center justify-between pt-px"><span className="ml-px text-[#2f5597]">Ookla</span><span>2021</span></div>
      <h3 className="h-[39px] whitespace-nowrap text-[26px] font-bold leading-[39px] tracking-[-0.330px]">Census Tract 1028.01</h3>
      <div className="mt-[8px] h-[43px] rounded-[9px] bg-[#e9e9e9] text-center">
        <div className="pt-[2px] text-[11.500px] font-bold leading-[15px] tracking-[0.1px]">Average Download Speed</div>
        <div className="text-[16.500px] leading-[27px] tracking-[-0.2px]">204.25</div>
      </div>
      <p className="mt-[9px] whitespace-nowrap pl-[8px] pt-px leading-[23.500px] tracking-[-0.13px]">The average download speed is 204.25<br />MB/s in Census Tract 1028.01.</p>
      <div className="-mr-[5px] -ml-[4px] mt-[8px]">
        <div className="h-[19px] pl-[132px] text-[12px] leading-[18px] tracking-[0.1px]">204.25</div>
        <div className="relative flex h-[29px] w-[322px]">
          {scale.map((c) => <span key={c} className={"h-full flex-1 " + c} />)}
          <i className="absolute left-[142px] top-[-2px] h-[11px] w-[2px] bg-black" />
          <i className="absolute left-[-1px] bottom-[-2px] h-[11px] w-[2px] bg-black" />
          <i className="absolute left-[161px] bottom-[-2px] h-[11px] w-[2px] bg-black" />
          <i className="absolute left-[278px] bottom-[-2px] h-[11px] w-[2px] bg-black" />
        </div>
        <div className="-ml-[11px] flex h-[20px] text-[12px] leading-[18px] tracking-[0.15px]">
          <span className="w-[162px]">106.13</span><span className="w-[117px]">213.91</span><span>276.03</span>
        </div>
        <div className="flex w-[322px] justify-between leading-[23px]"><span>Below</span><span>Selection median</span><span>Above</span></div>
      </div>
    </div>
  );
}

/* ---------- plot ---------- */

const xs = [178, 358.5, 539];
const series: [string, number, number, number][] = [
  [R, 1156, 1191, 1182.7],
  [O, 1157, 1098.500, 1081.5],
  [O, 1149, 1129, 1082.5],
  [O, 1228.3, 1118, 1081.7],
  [O, 1150, 1130, 1084],
  [Y, 1136.7, 1100.5, 1047.3],
  [Y, 1151.7, 1123, 1050],
  [Y, 1155.7, 1126, 1052],
  [Y, 1158, 1128, 1049],
  [Y, 1153, 1130, 1059],
  [Y, 1163, 1131, 1051],
  [Y, 1171.7, 1133.5, 1063.3],
  [Y, 1152, 1129, 1048],
  [L, 1102, 1047.3, 967.3],
  [L, 1104, 1070, 970],
  [L, 1106, 1076.5, 974],
  [L, 1103, 1073, 972],
  [L, 1141, 1099.3, 978],
  [L, 1165.3, 1074.3, 976],
  [B, 1114, 1027.7, 955],
  [B, 1129, 1065, 953.3],
  [B, 1101.5, 1018, 932.3],
  [D, 1109.3, 1031.5, 917.3],
];
const boxes = [
  { x: 178, hi: 1085.3, q3: 1126, med: 1141, q1: 1153, lo: 1193.7 },
  { x: 358.5, hi: 1003, q3: 1071, med: 1089.5, q1: 1116, lo: 1183.7 },
  { x: 539, hi: 926.3, q3: 992, med: 1014.5, q1: 1035.5, lo: 1101 },
];

function Plot() {
  return (
    <div className="w-[608px] shrink-0">
      <div className="flex h-[40px] border-b border-[#e8e8e8] text-[15px]">
        <div className="flex h-[40px] w-[60px] items-center justify-center rounded-t-[4px] border border-b-0 border-[#e8e8e8] bg-white pt-px">Plot</div>
        <div className="flex items-center pl-[17px] pt-[2px] tracking-[-0.1px] text-[#2f5597]">Data</div>
      </div>
      <svg width="608" height="421" viewBox="30 862 608 421" className="block" fontFamily="'DejaVu Sans', Verdana, sans-serif" fontSize="11.600">
        {[["250", 958.3], ["200", 1036.3], ["150", 1114.3], ["100", 1192.3]].map(([t, y]) => (
          <g key={t}>
            <path d={`M88 ${y}H629`} stroke="#eee" />
            <text x="86.500" y={Number(y) + 4} textAnchor="end" textLength="21.500">{t}</text>
          </g>
        ))}
        <text transform="translate(50.500 1211.500) rotate(-90)" fontSize="13" textLength="276">Average Download Speed (20 extremes)</text>
        {["2019", "2020", "2021"].map((t, i) => <text key={t} x={xs[i]} y="1271.800" textAnchor="middle" textLength="29.500">{t}</text>)}
        <g fill="none" stroke="#7b7b7b" strokeWidth="1.700">
          {boxes.map((b) => (
            <path key={b.x} d={`M${b.x - 44.3} ${b.q3}h88.600V${b.q1}h-88.600zM${b.x - 44.3} ${b.med}h88.600M${b.x - 22} ${b.hi}h44M${b.x - 22} ${b.lo}h44M${b.x} ${b.hi}V${b.q3}M${b.x} ${b.q1}V${b.lo}`} />
          ))}
        </g>
        {series.map(([c, a, b, d], i) => (
          <path key={i} d={`M${xs[0]} ${a}L${xs[1]} ${b} ${xs[2]} ${d}`} fill="none" stroke={c} strokeWidth="1.700" />
        ))}
        {series.map(([c, ...ys], i) => ys.map((y, k) => <circle key={`${i}-${k}`} cx={xs[k]} cy={y} r="3.900" fill={c} stroke="#b4b4b4" strokeWidth="1" />))}
        <circle cx="178" cy="1165.300" r="3.900" fill={L} stroke="#b4b4b4" />
        <path d="M178 1141.500L358.500 1118 539 1029.700" fill="none" stroke="#000" strokeWidth="4" />
        {[1141.5, 1118, 1029.7].map((y, k) => <circle key={y} cx={xs[k]} cy={y} r="5.600" stroke="#888" strokeWidth=".5" />)}
      </svg>
    </div>
  );
}

/* ---------- table ---------- */

const rows = `1028.01 132.59 147.55 204.25
1022 129.32 145.99 204.33
1038 145.07 155.99 207.72
1004 131.35 147.77 207.83
1037 139.62 178.02 210.74
1031 132.29 175.34 211.72
1016.03 119.74 161.76 212.97
1010 115.63 159.86 213.51
1015 140.56 166.00 213.91
1009 121.94 143.22 214.25
1026 128.49 172.02 217.84
1024 122.57 168.03 217.95
1016.01 130.48 155.03 218.22
1016.02 134.70 166.01 218.42
1020.02 148.76 172.96 221.03
1018.02 140.33 174.20 221.37
1028.02 130.84 161.55 223.81
1014.04 150.56 185.35 224.81
1014.01 133.77 159.10 225.05`.split("\n").map((r) => r.split(" "));

const Sort = ({ gap = "" }: { gap?: string }) => (
  <svg width="8" height="14" viewBox="0 0 8 14" fill="#d3d3d3" className={"shrink-0 " + gap}><path d="M4 0l4 6H0zM4 14l4-6H0z" /></svg>
);

function DataTable() {
  return (
    <div className="ml-[23px] w-[428px] pt-px text-[15px] tracking-[-0.05px]">
      <div className="flex h-[30.500px] items-center pt-px font-bold tracking-[0px]">
        <span className="w-[184px]">Name</span>
        <Sort />
        <span className="w-[66px] text-right">2019</span><Sort gap="ml-[4px]" />
        <span className="w-[64px] text-right">2020</span><Sort gap="ml-[3px]" />
        <span className="w-[66px] text-right">2021</span>
        <svg width="8" height="6" viewBox="0 0 8 6" className="ml-[4px] -mt-[9px]"><path d="M4 0l4 6H0z" fill="#8080e0" /></svg>
      </div>
      {rows.map((r, i) => (
        <div key={r[0]} className={"flex h-[23.270px] items-center whitespace-nowrap pt-[1.500px] " + (i === 0 ? "bg-[#adadad]" : "")}>
          <span className="w-[182px]">Census Tract {r[0]}</span>
          <span className="w-[76px] text-right">{r[1]}</span>
          <span className="w-[76px] text-right">{r[2]}</span>
          <span className="w-[77px] text-right">{r[3]}</span>
        </div>
      ))}
    </div>
  );
}

export default function App() {
  return (
    <div className="flex h-[1307px] w-[1124px] items-start overflow-hidden bg-white pl-[9px] pt-[8px] text-black [font-family:Inter,'Liberation_Sans',sans-serif]">
      <div className="h-[1278px] w-[1096px] shrink-0 overflow-hidden border-2 border-[#101b4d] bg-white shadow-[6px_7px_9px_rgba(0,0,0,0.5)]">
        <BrowserChrome />
        <Header />
        <Controls />
        <div className="flex h-[40px] items-center gap-[7px] pl-[10px] pt-px text-[15px] tracking-[-0.090px] text-[#2f5597]">
          <span>National Capital Region</span><span className="text-black">&gt;</span><span>Arlington County</span>
        </div>
        <h1 className="h-[60px] pl-[4px] text-center text-[36px] font-medium leading-[60px] tracking-[-0.770px]">Arlington County Tracts</h1>
        <div className="flex h-[432px] pl-[19px]"><CountyMap /><Info /></div>
        <div className="flex pl-[19px]"><Plot /><DataTable /></div>
      </div>
    </div>
  );
}
